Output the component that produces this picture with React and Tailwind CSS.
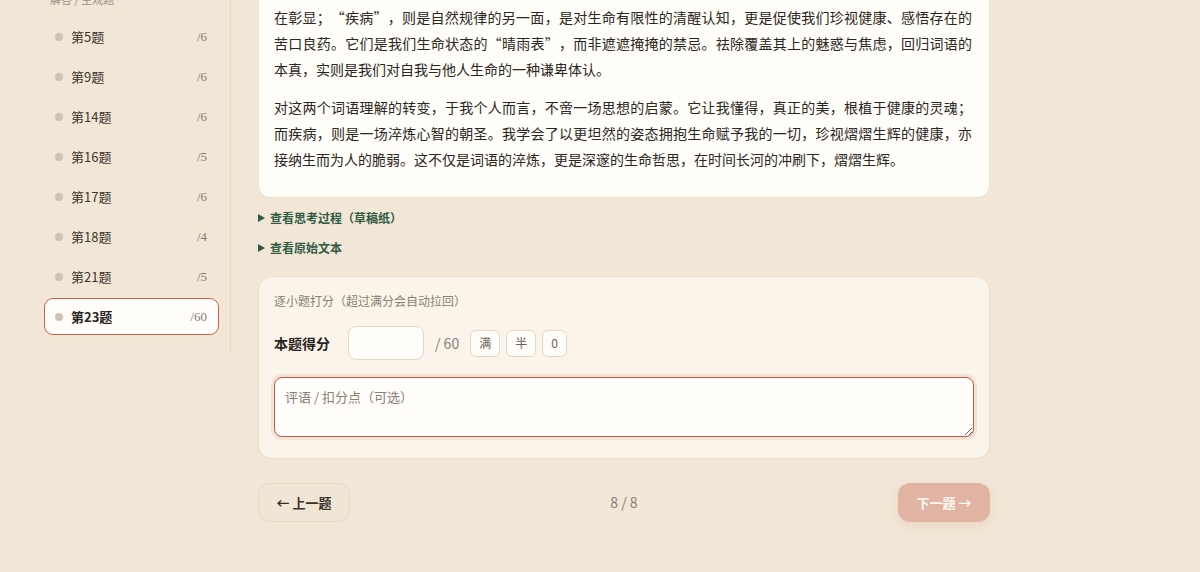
const questions = [
  { id: 5, full: 6 },
  { id: 9, full: 6 },
  { id: 14, full: 6 },
  { id: 16, full: 5 },
  { id: 17, full: 6 },
  { id: 18, full: 4 },
  { id: 21, full: 5 },
  { id: 23, full: 60 },
]

const paragraphs = [
  '在彰显；“疾病”，则是自然规律的另一面，是对生命有限性的清醒认知，更是促使我们珍视健康、感悟存在的苦口良药。它们是我们生命状态的“晴雨表”，而非遮遮掩掩的禁忌。祛除覆盖其上的魅惑与焦虑，回归词语的本真，实则是我们对自我与他人生命的一种谦卑体认。',
  '对这两个词语理解的转变，于我个人而言，不啻一场思想的启蒙。它让我懂得，真正的美，根植于健康的灵魂；而疾病，则是一场淬炼心智的朝圣。我学会了以更坦然的姿态拥抱生命赋予我的一切，珍视熠熠生辉的健康，亦接纳生而为人的脆弱。这不仅是词语的淬炼，更是深邃的生命哲思，在时间长河的冲刷下，熠熠生辉。',
]

// curly quotes take a full em, like the other CJK punctuation
function withWideQuotes(text) {
  return text.split(/([“”])/).map((part, i) => {
    if (part === '“')
      return (
        <span key={i} className="inline-block w-[1em] text-right">
          {part}
        </span>
      )
    if (part === '”')
      return (
        <span key={i} className="inline-block w-[1em] text-left">
          {part}
        </span>
      )
    return part
  })
}

function QuestionItem({ q, active }) {
  return (
    <div
      className={
        active
          ? 'flex h-[37px] items-center rounded-[9px] border border-[#c9604c] bg-[#fffdfa] pl-[10px] pr-[11px]'
          : 'flex h-[37px] items-center rounded-[9px] border border-transparent pl-[10px] pr-[11px]'
      }
    >
      <span className="h-[8px] w-[8px] rounded-full bg-[#cdc3b3]" />
      <span
        className={
          active
            ? 'ml-[8px] text-[13px] font-semibold text-[#2a241f]'
            : 'ml-[8px] text-[13px] text-[#3b342c]'
        }
      >
        第{q.id}题
      </span>
      <span className="ml-auto font-['Liberation_Serif',serif] text-[13px] text-[#857a6c]">
        /{q.full}
      </span>
    </div>
  )
}

function Disclosure({ label }) {
  return (
    <div className="flex h-[20px] items-center text-[12px] font-bold text-[#2f5a43]">
      <svg width="7" height="8" viewBox="0 0 7 8" className="mr-[5px]">
        <path d="M0 0 L7 4 L0 8 Z" fill="#2f5a43" />
      </svg>
      {label}
    </div>
  )
}

function QuickButton({ children }) {
  return (
    <button className="flex h-[27px] items-center rounded-[6px] border border-[#e6d6c1] bg-[#fffdf8] px-[8px] text-[12px] text-[#6b6258]">
      {children}
    </button>
  )
}

export default function App() {
  return (
    <div
      lang="zh-CN"
      className="flex h-[572px] overflow-hidden bg-[#f2e7d7] font-['Noto_Sans_CJK_SC','Noto_Sans',sans-serif]"
    >
      {/* Sidebar */}
      <aside className="-mt-[9px] w-[231px] shrink-0 self-start border-r border-[#e6d9c6] pb-[20px] pl-[44px] pr-[11px]">
        <div className="ml-[6px] text-[11px] leading-[16px] text-[#9a8f80]">解答 / 主观题</div>
        <div className="mt-[11px] flex flex-col gap-[3px]">
          {questions.map((q) => (
            <QuestionItem key={q.id} q={q} active={q.id === 23} />
          ))}
        </div>
      </aside>

      {/* Main column */}
      <main className="ml-[27px] flex w-[732px] shrink-0 flex-col">
        <div className="-mt-[30px] rounded-[12px] border border-[#ebdecb] bg-[#fffdf8] pb-[25px] pl-[15px] pr-[17px] pt-[33px]">
          {paragraphs.map((p, i) => (
            <p
              key={i}
              className="mb-[12px] text-justify text-[14px] leading-[26px] text-[#2b2620] last:mb-0"
            >
              {withWideQuotes(p)}
            </p>
          ))}
        </div>

        <div className="mt-[10px]">
          <Disclosure label="查看思考过程（草稿纸）" />
        </div>
        <div className="mt-[10px]">
          <Disclosure label="查看原始文本" />
        </div>

        {/* Scoring */}
        <div className="mt-[18px] rounded-[14px] border border-[#ebdecb] bg-[#faf4ea] px-[15px] pb-[21px] pt-[16px]">
          <div className="text-[12px] leading-[16px] text-[#8a7f72]">逐小题打分（超过满分会自动拉回）</div>
          <div className="mt-[17px] flex h-[34px] items-center">
            <span className="w-[74px] text-[14px] font-bold text-[#2a241f]">本题得分</span>
            <input
              className="h-[34px] w-[76px] rounded-[8px] border border-[#e6d6c1] bg-[#fffdf9] outline-none"
              type="text"
            />
            <span className="ml-[11px] text-[14px] text-[#8a7f72]">/ 60</span>
            <div className="ml-[11px] flex gap-[6px]">
              <QuickButton>满</QuickButton>
              <QuickButton>半</QuickButton>
              <QuickButton>0</QuickButton>
            </div>
          </div>
          <textarea
            className="mt-[17px] block h-[60px] w-full resize-y rounded-[8px] border-[1.5px] border-[#c9563f] bg-[#fffdf9] px-[10px] py-[9px] text-[13px] leading-[20px] shadow-[0_0_0_3px_rgba(201,86,63,0.1)] outline-none placeholder:text-[#8a7f72]"
            placeholder="评语 / 扣分点（可选）"
          />
        </div>

        {/* Navigation */}
        <div className="mt-[24px] flex items-center justify-between">
          <button className="flex h-[39px] w-[92px] items-center justify-center rounded-[12px] border border-[#e7d9c5] bg-[#f1e6d5] text-[13px] font-bold text-[#3a322a]">
            ← 上一题
          </button>
          <span className="text-[14px] text-[#8a7f72]">8 / 8</span>
          <button className="flex h-[39px] w-[92px] items-center justify-center rounded-[12px] bg-[#e0b3a2] text-[13px] font-bold text-[#fff8f2] shadow-[0_4px_12px_rgba(200,120,90,0.15)]">
            下一题 →
          </button>
        </div>
      </main>
    </div>
  )
}
